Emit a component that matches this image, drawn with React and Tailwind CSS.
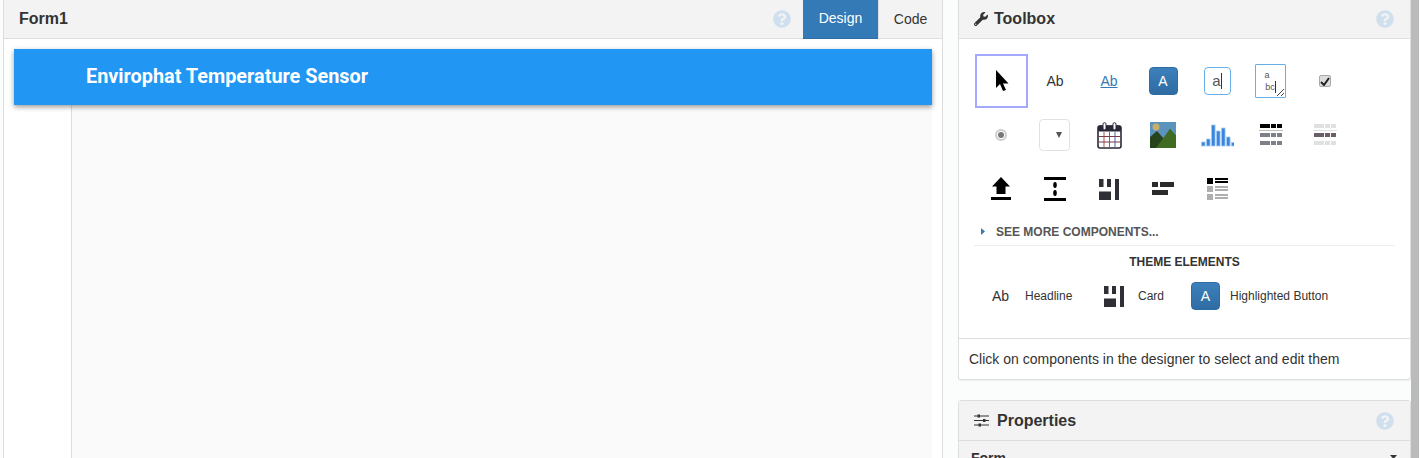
import React from "react";
import { FaWrench, FaQuestionCircle } from "react-icons/fa";

function Help({ className = "" }) {
  return <FaQuestionCircle size={18} className={"shrink-0 text-[#cfdfee] " + className} />;
}

function Cursor() {
  return (
    <svg className="ml-[1px]" width="14" height="22" viewBox="0 0 14 22"><path d="M1 0 L1 18 L5 14 L8 21 L11 20 L8 13.5 L13.5 13.5 Z" fill="#000" /></svg>
  );
}

function Sliders() {
  return (
    <svg width="15" height="13" viewBox="0 0 15 13">
      <path d="M0 2H15M0 6.5H15M0 11H15" stroke="#333" strokeWidth="1" />
      <rect x="3.5" y="0.5" width="2.5" height="3" fill="#333" />
      <rect x="9" y="5" width="2.5" height="3" fill="#333" />
      <rect x="4.5" y="9.5" width="2.5" height="3" fill="#333" />
    </svg>
  );
}

function BlueA() {
  return (
    <span className="flex h-[28px] w-[29px] items-center justify-center rounded-[4px] border border-[#2e6da4] bg-gradient-to-b from-[#3c80bb] to-[#2f6ca3] text-[14px] text-white">A</span>
  );
}

function Calendar() {
  return (
    <svg width="25" height="27" viewBox="0 0 25 27">
      <rect x="1" y="4" width="23" height="22" rx="2" fill="#fff" stroke="#2a2838" strokeWidth="1.6" />
      <rect x="1" y="3.5" width="23" height="6" rx="1.5" fill="#2a2838" />
      <rect x="6" y="0.7" width="3" height="7" rx="1.5" fill="#fff" stroke="#2a2838" />
      <rect x="16" y="0.7" width="3" height="7" rx="1.5" fill="#fff" stroke="#2a2838" />
      <path d="M7 10V25M12.5 10V25" stroke="#b8504a" strokeWidth="1" />
      <path d="M18 10V25" stroke="#4a63b8" strokeWidth="1" />
      <path d="M2 14.5H23M2 20H23" stroke="#7a3a4a" strokeWidth="1" />
    </svg>
  );
}

function Picture() {
  return (
    <svg width="26" height="26" viewBox="0 0 26 26">
      <rect width="26" height="26" fill="#5b93bd" />
      <circle cx="6" cy="5" r="3.5" fill="#c9ad6a" />
      <path d="M0 15 L7 9 L14 17 L20 7 L26 14 V26 H0 Z" fill="#27431a" />
      <path d="M6 26 L20 7 L26 14 V26 Z" fill="#3f6b23" />
    </svg>
  );
}

function Chart() {
  const bars = [[0, 4], [5, 7], [10, 21], [15, 15], [20, 18], [25, 9], [30, 3.5]];
  return (
    <svg width="33" height="23" viewBox="0 0 33 23">
      {bars.map(([x, h]) => (
        <rect key={x} x={x + 0.5} y={22 - h} width="3.6" height={h} fill="#3a86dc" stroke="#a7cdf2" strokeWidth="0.8" />
      ))}
    </svg>
  );
}

function TableIcon({ rows, line }) {
  return (
    <svg width="24" height="23" viewBox="0 0 24 23">
      {rows.map(([y, c], i) => (
        <g key={i} fill={c}>
          <rect x="1" y={y} width="10" height="4" />
          <rect x="12" y={y} width="5" height="4" />
          <rect x="18" y={y} width="5" height="4" />
        </g>
      ))}
      <rect x="0" y="6" width="24" height="1" fill={line} />
    </svg>
  );
}

function Upload() {
  return (
    <svg width="20" height="24" viewBox="0 0 20 24"><path d="M10 0 L19 9.5 H14.5 V17 H5.5 V9.5 H1 Z" fill="#000" /><rect x="0" y="20" width="20" height="3" fill="#000" /></svg>
  );
}

function Spacer() {
  return (
    <svg width="22" height="24" viewBox="0 0 22 24">
      <rect y="0" width="22" height="3" fill="#000" />
      <rect y="21" width="22" height="3" fill="#000" />
      <ellipse cx="11" cy="8" rx="1.8" ry="3" fill="#000" />
      <ellipse cx="11" cy="16" rx="1.8" ry="3" fill="#000" />
    </svg>
  );
}

function Card() {
  return (
    <svg width="20" height="21" viewBox="0 0 20 21" fill="#2f2f36">
      <rect x="0" y="0" width="4.5" height="8" />
      <rect x="8" y="0" width="4" height="8" />
      <rect x="16" y="0" width="4" height="21" />
      <rect x="0" y="12.5" width="12" height="8.5" />
    </svg>
  );
}

function Flow() {
  return (
    <svg width="22" height="14" viewBox="0 0 22 14" fill="#2b2b2b">
      <rect x="0" y="0" width="6" height="5" />
      <rect x="8" y="0" width="14" height="5" />
      <rect x="0" y="8" width="16" height="5" />
    </svg>
  );
}

function RepeatIcon() {
  const rows = [[0, "#000"], [8, "#aeaeae"], [16, "#aeaeae"]];
  return (
    <svg width="21" height="22" viewBox="0 0 21 22">
      {rows.map(([y, c]) => (
        <g key={y} fill={c}>
          <rect x="0" y={y} width="6" height="6" />
          <rect x="8" y={y} width="13" height="2" />
          <rect x="8" y={y + 3} width="13" height="2" />
        </g>
      ))}
    </svg>
  );
}

function Tool({ children, selected }) {
  return (
    <div className="flex h-[54px] items-center justify-center">
      {selected ? (
        <div className="flex h-[54px] w-[53px] items-center justify-center self-start border-[2px] border-[#a5a8ff]">{children}</div>
      ) : children}
    </div>
  );
}

function PanelHeader({ icon, title, height = "h-[39px]" }) {
  return (
    <div className={"flex shrink-0 items-center justify-between border-b border-[#dedede] bg-[#f3f3f3] pl-[15px] pr-[16px] " + height}>
      <div className="flex items-center gap-[6px] text-[16px] font-bold text-[#333]">
        {icon}
        <span>{title}</span>
      </div>
      <Help />
    </div>
  );
}

export default function App() {
  return (
    <div className="flex h-[458px] w-[1420px] overflow-hidden bg-[#fbfcfc] font-['Liberation_Sans',sans-serif] text-[#333]">
      {/* Designer */}
      <div className="ml-[3px] flex h-[480px] w-[940px] shrink-0 flex-col border-x border-[#dddddd] bg-white">
        <div className="flex h-[39px] shrink-0 items-center justify-between border-b border-[#dedede] bg-[#f3f3f3] pl-[15px]">
          <span className="text-[16px] font-bold text-[#333]">Form1</span>
          <div className="flex h-full items-center">
            <Help className="mr-[12px]" />
            <div className="flex h-[39px] w-[75px] items-center justify-center border-b border-[#2e6da4] bg-[#337ab7] text-[14px] text-white">Design</div>
            <div className="flex h-[38px] w-[64px] items-center justify-center self-start border-l border-[#dedede] text-[14px] text-[#333]">Code</div>
          </div>
        </div>
        <div className="flex min-h-0 flex-1 flex-col pl-[10px] pr-[10px] pt-[10px]">
          <div className="relative z-10 flex h-[56px] shrink-0 items-center bg-[#2196f3] pl-[72px] font-['Roboto',sans-serif] text-[19.86px] font-bold text-white shadow-[0_2px_5px_rgba(0,0,0,0.4)]">
            Envirophat Temperature Sensor
          </div>
          <div className="flex flex-1">
            <div className="w-[58px] shrink-0 border-r border-[#dedede] bg-white" />
            <div className="flex-1 bg-[#fafafa]" />
          </div>
        </div>
      </div>

      {/* Right column */}
      <div className="ml-[15px] flex w-[453px] shrink-0 flex-col">
        <div className="flex flex-col rounded-b-[3px] border border-t-0 border-[#dedede] bg-white shadow-[0_1px_1px_rgba(0,0,0,0.05)]">
          <PanelHeader icon={<FaWrench size={14} className="text-[#333]" />} title="Toolbox" />
          <div className="flex h-[299px] flex-col pl-[15px] pr-[15px] pt-[15px]">
            <div className="grid grid-cols-[repeat(7,54px)] auto-rows-[54px]">
              <Tool selected><Cursor /></Tool>
              <Tool><span className="text-[14px] text-[#333]">Ab</span></Tool>
              <Tool><span className="text-[14px] text-[#337ab7] underline">Ab</span></Tool>
              <Tool><BlueA /></Tool>
              <Tool>
                <span className="flex h-[28px] w-[27px] items-center justify-center rounded-[4px] border border-[#66afe9] text-[15px] font-light text-[#555]">a<span className="h-[16px] w-px bg-[#333]" /></span>
              </Tool>
              <Tool>
                <span className="relative -ml-[1px] flex h-[34px] w-[31px] flex-col items-center justify-center rounded-[1px] border border-[#66afe9] text-[9px] leading-[12px] text-[#555]">
                  <span className="-ml-[7px]">a</span>
                  <span className="flex items-center">bc<span className="h-[12px] w-px bg-[#333]" /></span>
                  <svg className="absolute bottom-0 right-0" width="9" height="9" viewBox="0 0 9 9"><path d="M1 8L8 1M5 8L8 5" stroke="#444" strokeWidth="1" /></svg>
                </span>
              </Tool>
              <Tool>
                <span className="flex h-[12px] w-[12px] items-center justify-center rounded-[2px] border border-[#aaa] bg-[#ddd]">
                  <svg width="10" height="9" viewBox="0 0 10 9"><path d="M1 5L4 8L9 1" fill="none" stroke="#222" strokeWidth="2" /></svg>
                </span>
              </Tool>

              <Tool>
                <span className="flex h-[12px] w-[12px] items-center justify-center rounded-full border-[2px] border-[#ccc] bg-white"><span className="h-[6px] w-[6px] rounded-full bg-[#777]" /></span>
              </Tool>
              <Tool>
                <span className="-ml-[1px] flex h-[32px] w-[31px] items-center justify-end rounded-[4px] border border-[#e2e2e2] pr-[7px]">
                  <svg width="6" height="6" viewBox="0 0 6 6"><path d="M0 0H6L3 6Z" fill="#555" /></svg>
                </span>
              </Tool>
              <Tool><Calendar /></Tool>
              <Tool><Picture /></Tool>
              <Tool><Chart /></Tool>
              <Tool><TableIcon line="#bdbdbd" rows={[[0, "#000"], [9, "#7d8089"], [17, "#7d8089"]]} /></Tool>
              <Tool><TableIcon line="#e0e0e0" rows={[[0, "#e0e0e0"], [9, "#6b5f68"], [17, "#e0e0e0"]]} /></Tool>

              <Tool><Upload /></Tool>
              <Tool><Spacer /></Tool>
              <Tool><Card /></Tool>
              <Tool><Flow /></Tool>
              <Tool><RepeatIcon /></Tool>
            </div>
            <div className="mt-[5px] flex h-[25px] items-center border-b border-[#eeeeee] pb-[3px] pl-[7px] text-[12px] font-bold text-[#555]">
              <svg className="mr-[11px]" width="4" height="7" viewBox="0 0 4 7"><path d="M0 0L4 3.5L0 7Z" fill="#337ab7" /></svg>
              SEE MORE COMPONENTS...
            </div>
            <div className="mt-[9px] text-center text-[12px] font-bold leading-[14px] text-[#333]">THEME ELEMENTS</div>
            <div className="mt-[9px] flex h-[36px] items-center pl-[18px] text-[12px] text-[#333]">
              <span className="w-[33px] text-[14px]">Ab</span>
              <span className="w-[79px]">Headline</span>
              <Card />
              <span className="ml-[14px] w-[53px]">Card</span>
              <BlueA />
              <span className="ml-[10px]">Highlighted Button</span>
            </div>
          </div>
          <div className="flex h-[41px] items-center border-t border-[#dedede] pl-[10px] text-[14px] text-[#333]">
            Click on components in the designer to select and edit them
          </div>
        </div>

        <div className="mt-[20px] flex flex-col rounded-t-[3px] border border-[#dedede] bg-[#f3f3f3]">
          <PanelHeader icon={<span className="mr-[2px] flex"><Sliders /></span>} title="Properties" height="h-[40px]" />
          <div className="flex h-[40px] items-start justify-between pl-[12px] pr-[13px] pt-[7px] text-[14px] font-bold text-[#333]">
            <span>Form</span>
            <svg className="mt-[7px]" width="7" height="4" viewBox="0 0 7 4"><path d="M0 0H7L3.5 4Z" fill="#333" /></svg>
          </div>
        </div>
      </div>

      <div className="w-[8px] shrink-0 bg-[#bbbbbb]" />
    </div>
  );
}
